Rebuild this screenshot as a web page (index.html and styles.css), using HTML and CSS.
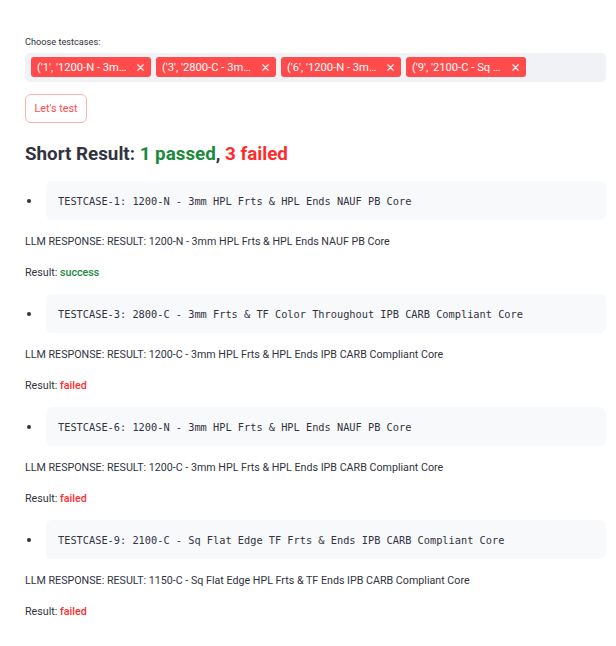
FILE: index.html
```html
<!DOCTYPE html>
<html lang="en">
<head>
<meta charset="utf-8">
<title>Testcases</title>
<link rel="stylesheet" href="styles.css">
</head>
<body>
<main class="main">
  <div class="label">Choose testcases:</div>
  <div class="multiselect">
    <span class="tag"><span class="tag-text">('1', '1200-N - 3m…</span><svg class="tag-x" viewBox="0 0 8 8" width="7" height="7"><path d="M1 1L7 7M7 1L1 7" stroke="#fff" stroke-width="1.6" stroke-linecap="round"/></svg></span>
    <span class="tag"><span class="tag-text">('3', '2800-C - 3m…</span><svg class="tag-x" viewBox="0 0 8 8" width="7" height="7"><path d="M1 1L7 7M7 1L1 7" stroke="#fff" stroke-width="1.6" stroke-linecap="round"/></svg></span>
    <span class="tag"><span class="tag-text">('6', '1200-N - 3m…</span><svg class="tag-x" viewBox="0 0 8 8" width="7" height="7"><path d="M1 1L7 7M7 1L1 7" stroke="#fff" stroke-width="1.6" stroke-linecap="round"/></svg></span>
    <span class="tag"><span class="tag-text">('9', '2100-C - Sq …</span><svg class="tag-x" viewBox="0 0 8 8" width="7" height="7"><path d="M1 1L7 7M7 1L1 7" stroke="#fff" stroke-width="1.6" stroke-linecap="round"/></svg></span>
  </div>
  <button class="btn" type="button">Let's test</button>
  <h2 class="heading">Short Result: <span class="green">1 passed</span>, <span class="red">3 failed</span></h2>

  <section class="case">
    <div class="item"><span class="dot"></span><code class="code">TESTCASE-1: 1200-N - 3mm HPL Frts &amp; HPL Ends NAUF PB Core</code></div>
    <p class="line">LLM RESPONSE: RESULT: 1200-N - 3mm HPL Frts &amp; HPL Ends NAUF PB Core</p>
    <p class="line">Result: <strong class="green-s">success</strong></p>
  </section>

  <section class="case">
    <div class="item"><span class="dot"></span><code class="code">TESTCASE-3: 2800-C - 3mm Frts &amp; TF Color Throughout IPB CARB Compliant Core</code></div>
    <p class="line">LLM RESPONSE: RESULT: 1200-C - 3mm HPL Frts &amp; HPL Ends IPB CARB Compliant Core</p>
    <p class="line">Result: <strong class="red-s">failed</strong></p>
  </section>

  <section class="case">
    <div class="item"><span class="dot"></span><code class="code">TESTCASE-6: 1200-N - 3mm HPL Frts &amp; HPL Ends NAUF PB Core</code></div>
    <p class="line">LLM RESPONSE: RESULT: 1200-C - 3mm HPL Frts &amp; HPL Ends IPB CARB Compliant Core</p>
    <p class="line">Result: <strong class="red-s">failed</strong></p>
  </section>

  <section class="case">
    <div class="item"><span class="dot"></span><code class="code">TESTCASE-9: 2100-C - Sq Flat Edge TF Frts &amp; Ends IPB CARB Compliant Core</code></div>
    <p class="line">LLM RESPONSE: RESULT: 1150-C - Sq Flat Edge HPL Frts &amp; TF Ends IPB CARB Compliant Core</p>
    <p class="line">Result: <strong class="red-s">failed</strong></p>
  </section>
</main>
</body>
</html>
```
FILE: styles.css
```css
html, body {
  margin: 0;
  padding: 0;
  background: #ffffff;
}

.main {
  display: flex;
  flex-direction: column;
  align-items: flex-start;
  padding: 35px 10px 0 25px;
  font-family: "Roboto", "Noto Sans", sans-serif;
  color: #31333f;
}

.label {
  font-size: 9.2px;
  line-height: 14px;
  color: #31333f;
}

.multiselect {
  box-sizing: border-box;
  align-self: stretch;
  margin-top: 4px;
  height: 29px;
  padding: 4px 6px 5px;
  background: #f0f2f6;
  border-radius: 5px;
  display: flex;
  align-items: flex-start;
  gap: 5.5px;
}

.tag {
  box-sizing: border-box;
  width: 119.5px;
  height: 20px;
  display: flex;
  align-items: center;
  justify-content: space-between;
  padding: 0 7px 0 6px;
  background: #ff4b4b;
  border-radius: 3px;
  color: #ffffff;
}

.tag-text {
  font-size: 11.2px;
  white-space: nowrap;
  overflow: hidden;
}

.tag-x {
  flex: none;
}

.btn {
  box-sizing: border-box;
  margin-top: 12px;
  width: 62px;
  height: 29px;
  padding: 0;
  background: #ffffff;
  border: 1px solid #ffb0b0;
  border-radius: 6px;
  color: #ff4b4b;
  font-family: "Roboto", "Noto Sans", sans-serif;
  font-size: 10.8px;
}

.heading {
  margin: 18px 0 0;
  font-size: 18.8px;
  line-height: 26px;
  font-weight: 700;
  color: #31333f;
}

.green { color: #1b8a3d; }
.red { color: #ff2b2b; }

.case {
  align-self: stretch;
  display: flex;
  flex-direction: column;
}

.case:first-of-type {
  margin-top: 14px;
}

.case + .case {
  margin-top: 13px;
}

.item {
  display: flex;
  align-items: center;
}

.dot {
  flex: none;
  width: 4px;
  height: 4px;
  margin: 0 15px 0 2px;
  border-radius: 50%;
  background: #31333f;
}

.code {
  box-sizing: border-box;
  flex: 1;
  height: 39px;
  display: flex;
  align-items: center;
  padding: 0 12px;
  background: #f8f9fb;
  border-radius: 6px;
  font-family: "DejaVu Sans Mono", "Liberation Mono", monospace;
  font-size: 10.3px;
  color: #31333f;
  white-space: pre;
}

.line {
  margin: 14px 0 0;
  font-size: 10.7px;
  line-height: 16px;
}

.line + .line {
  margin-top: 15px;
}

.green-s {
  color: #1b8a3d;
  font-weight: 500;
}

.red-s {
  color: #ff2b2b;
  font-weight: 500;
}
```
